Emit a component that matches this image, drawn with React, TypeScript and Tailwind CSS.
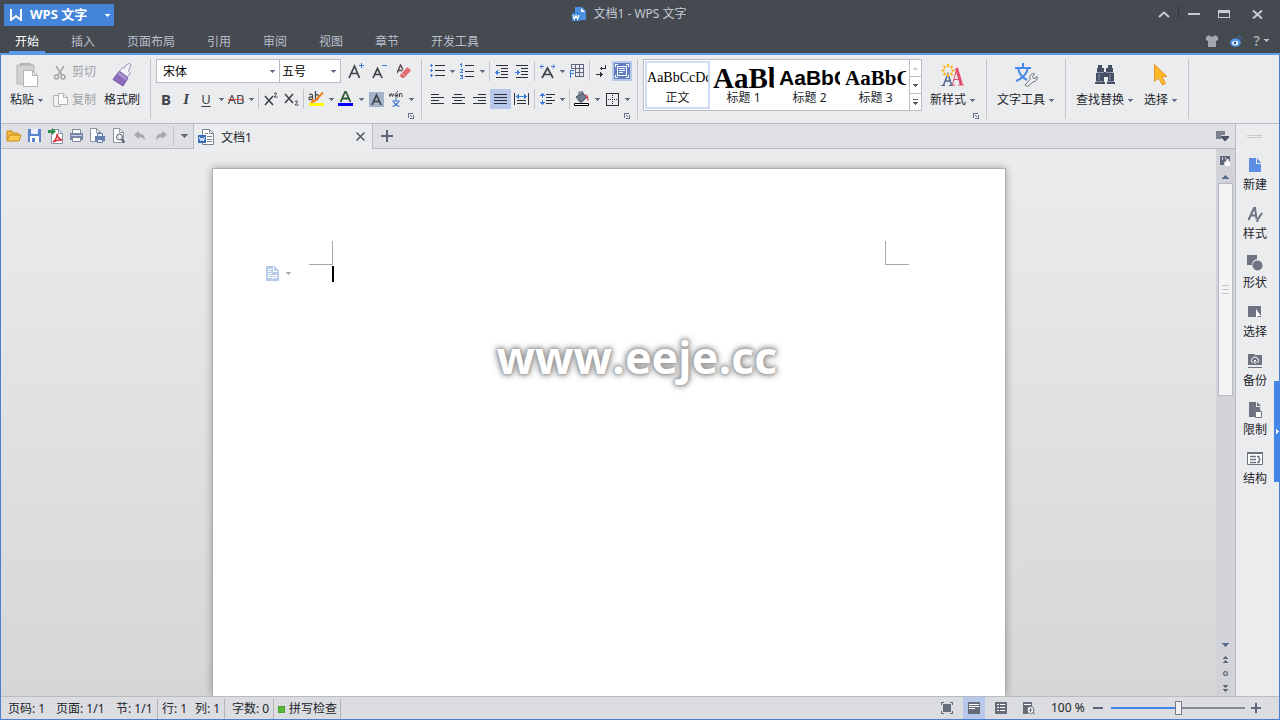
import React, { useState } from 'react';
import { clsx } from 'clsx';

type IconProps = { w?: number; h?: number; crisp?: boolean; children: React.ReactNode };

const Icon = ({ w = 16, h = 16, crisp, children }: IconProps) => (
  <svg
    width={w}
    height={h}
    viewBox={`0 0 ${w} ${h}`}
    fill="none"
    shapeRendering={crisp ? 'crispEdges' : 'auto'}
    className="shrink-0"
    aria-hidden="true"
  >
    {children}
  </svg>
);

const Caret = ({ color = '#68718c' }: { color?: string }) => (
  <Icon w={5} h={3} crisp>
    <path d="M0 0h5v1H0zM1 1h3v1H1zM2 2h1v1H2z" fill={color} />
  </Icon>
);

const ToolButton = ({ label, wide, active, children }: { label: string; wide?: boolean; active?: boolean; children: React.ReactNode }) => (
  <button
    type="button"
    aria-label={label}
    className={clsx(
      'flex h-5 shrink-0 items-center justify-center',
      wide ? 'w-[21px]' : 'w-5',
      active ? 'bg-[#b7c8ea]' : 'hover:bg-[#d5def0]'
    )}
  >
    {children}
  </button>
);

const DropButton = ({ label }: { label: string }) => (
  <button type="button" aria-label={label} className="flex h-5 w-2.5 shrink-0 items-center justify-center hover:bg-[#d5def0]">
    <Caret />
  </button>
);

const Sep = () => <span className="mx-0.5 h-5 w-px shrink-0 bg-[#c3c5cb]" />;

const GroupLine = () => <span className="mt-1 h-[60px] w-px shrink-0 bg-[#c3c5cb]" />;

const Launcher = ({ label }: { label: string }) => (
  <button type="button" aria-label={label} className="flex h-2 w-2.5 items-center justify-center">
    <Icon w={6} h={6} crisp>
      <path d="M0 0h5v1H1v4H0zM5 2h1v4H2V5h3zM3 3h1v1H3zM2 2h1v1H2z" fill="#68718c" />
    </Icon>
  </button>
);

const Lines = ({ rows }: { rows: number[][] }) => (
  <>
    {rows.map(([x, y, w]) => (
      <rect key={`${x}-${y}`} x={x} y={y} width={w} height={1} fill="#2c2f36" />
    ))}
  </>
);

const menus = ['开始', '插入', '页面布局', '引用', '审阅', '视图', '章节', '开发工具'];

const WriterDocIcon = () => (
  <Icon w={14} h={14}>
    <path d="M3 0h7l4 4v9H3z" fill="#4a8fe0" />
    <path d="M9 1l4 4H9z" fill="#fff" />
    <path d="M0 6h8v8H0z" fill="#3f86da" />
    <path d="M1 8l1.300 4L4 8.500 5.600 12 7 8" stroke="#fff" strokeWidth="1.300" />
  </Icon>
);

const TitleBar = () => (
  <header className="bg-[#454950] text-[#c5cad8]">
    <div className="flex h-7 items-start">
      <div className="flex flex-1 pl-1 pt-1">
        <button type="button" className="flex h-[22px] w-[110px] items-center bg-[#4485d9] pl-1.5 text-[13px] font-bold text-white">
          <Icon w={12} h={12}>
            <path d="M1 0v11l5-4 5 4V0" stroke="#fff" strokeWidth="2" />
          </Icon>
          <span className="ml-2 flex-1 whitespace-nowrap text-left">WPS 文字</span>
          <span className="mr-1"><Caret color="#fff" /></span>
        </button>
      </div>
      <div className="mr-3.5 flex h-7 items-center gap-[7px]">
        <WriterDocIcon />
        <h1 className="whitespace-nowrap text-xs">文档1 - WPS 文字</h1>
      </div>
      <div className="flex h-7 flex-1 items-center justify-end pr-[11px]">
        <button type="button" aria-label="折叠功能区" className="flex w-5 justify-center">
          <Icon w={12} h={7}><path d="M1 6l5-4.500L11 6" stroke="#c5cad8" strokeWidth="2" /></Icon>
        </button>
        <span className="mb-1 ml-1 h-3 w-px bg-[#2f3238]" />
        <button type="button" aria-label="最小化" className="flex w-[29px] justify-center">
          <Icon w={12} h={2} crisp><path d="M0 0h12v2H0z" fill="#c5cad8" /></Icon>
        </button>
        <button type="button" aria-label="还原" className="flex w-[31px] justify-center">
          <Icon w={12} h={8} crisp><path d="M0 0h12v8H0zM1 3v4h10V3z" fill="#c5cad8" fillRule="evenodd" /></Icon>
        </button>
        <button type="button" aria-label="关闭" className="ml-1.5 flex w-6 justify-center">
          <Icon w={11} h={9}><path d="M1 .5l9 8M10 .5l-9 8" stroke="#c5cad8" strokeWidth="2" /></Icon>
        </button>
      </div>
    </div>
    <div className="flex h-[25px] items-stretch justify-between">
      <nav className="flex gap-8 pl-[15px]">
        {menus.map((name, i) => (
          <a
            key={name}
            href="#"
            className={clsx('relative whitespace-nowrap text-xs leading-[27px]', i === 0 ? 'text-white' : 'text-[#b9bfcc]')}
          >
            {name}
            {i === 0 && <span className="absolute -inset-x-1.5 bottom-0 h-0.5 bg-[#5a9ae8]" />}
          </a>
        ))}
      </nav>
      <div className="flex items-center gap-3 pr-[11px]">
        <button type="button" aria-label="皮肤">
          <Icon w={12} h={12}><path d="M0 2l3-2 1.500 1.500h3L9 0l3 2v3l-2 1v6H2V6L0 5z" fill="#a3a8b0" /></Icon>
        </button>
        <button type="button" aria-label="微博">
          <Icon w={12} h={12}>
            <ellipse cx="5.500" cy="7.500" rx="5.300" ry="4.300" fill="#4d93e6" />
            <ellipse cx="5.200" cy="8" rx="3" ry="2.300" fill="#fff" />
            <circle cx="5" cy="8" r="1.400" fill="#2a5da8" />
            <path d="M8 1q3 0 3 3" stroke="#38639c" strokeWidth="1.500" />
          </Icon>
        </button>
        <button type="button" aria-label="帮助" className="flex items-center gap-1 text-sm font-semibold leading-none text-[#a3a8b0]">
          ?<Caret color="#b9bfcc" />
        </button>
      </div>
    </div>
    <div className="h-0.5 bg-[#5a9ae8]" />
  </header>
);

const BigButton = ({ label, drop, children }: { label: string; drop?: boolean; children: React.ReactNode }) => (
  <button type="button" className="flex shrink-0 flex-col items-center hover:bg-[#dfe6f3]">
    <span className="flex h-7 items-center">{children}</span>
    <span className="mt-px flex h-5 items-center gap-1 whitespace-nowrap text-xs">
      {label}
      {drop && <Caret />}
    </span>
  </button>
);

const ClipboardGroup = () => (
  <div className="flex shrink-0 items-start pl-[9px] pr-2.5 pt-1.5">
    <BigButton label="粘贴" drop>
      <Icon w={22} h={24}>
        <path d="M1 2h17v19H1z" fill="#d3d3d3" stroke="#b3b3b3" />
        <path d="M5 3V1h9v2" stroke="#b3b3b3" strokeWidth="2" />
        <path d="M7.500 7.500h9l5 5v11h-14z" fill="#fff" stroke="#b5b5b5" />
        <path d="M16.500 7.500v5h5z" fill="#e4e4e4" stroke="#b5b5b5" />
      </Icon>
    </BigButton>
    <div className="ml-2.5 mt-px flex flex-col gap-2 text-xs text-[#a0a1a5]">
      <button type="button" disabled className="flex h-5 items-center gap-1.5 whitespace-nowrap">
        <Icon w={13} h={15}>
          <path d="M3 1l6 9M11 1L5 10" stroke="#a6a6a6" strokeWidth="1.500" />
          <circle cx="3.500" cy="12" r="2" stroke="#a6a6a6" strokeWidth="1.500" />
          <circle cx="10" cy="12" r="2" stroke="#a6a6a6" strokeWidth="1.500" />
        </Icon>
        剪切
      </button>
      <button type="button" disabled className="flex h-5 items-center gap-1 whitespace-nowrap">
        <Icon w={15} h={15}>
          <path d="M.5 2.500h7v11h-7z" fill="#f2f2f2" stroke="#b3b3b3" />
          <path d="M5.500.5h5l4 4v7h-9z" fill="#fafafa" stroke="#b3b3b3" />
          <path d="M10.500.5v4h4" stroke="#b3b3b3" />
        </Icon>
        复制
      </button>
    </div>
    <div className="ml-2">
      <BigButton label="格式刷">
        <Icon w={22} h={24}>
          <path d="M15 2l3-1.500 2 1-2.500 6.500 2 2-3 4-8-6 3-3.500 2 .5z" fill="#f4f2f8" stroke="#9d93b4" />
          <path d="M8 8.500L17 15l-5 8-10-6.500z" fill="#8b6cb8" stroke="#74559f" />
          <path d="M8 9l8.500 6-1.500 2-8.500-6z" fill="#b196d6" />
        </Icon>
      </BigButton>
    </div>
  </div>
);

const ComboBox = ({ label, options, className }: { label: string; options: string[]; className: string }) => (
  <span className={clsx('relative flex h-6 items-center border border-[#babdc5] bg-white', className)}>
    <select aria-label={label} className="h-full w-full appearance-none bg-transparent pt-px text-xs text-black outline-none">
      {options.map((o) => <option key={o}>{o}</option>)}
    </select>
    <span className="pointer-events-none absolute right-1"><Caret /></span>
  </span>
);

const FontGroup = () => (
  <div className="shrink-0 pl-[5px] pr-[5px] pt-1">
    <div className="flex items-center">
      <ComboBox label="字体" options={['宋体', '黑体', '楷体']} className="w-[124px] pl-1.5" />
      <ComboBox label="字号" options={['五号', '四号', '小四']} className="-ml-px w-[62px] pl-0.5" />
      <span className="w-[3px]" />
      <button type="button" aria-label="增大字号" className="flex h-5 w-6 items-center justify-center">
        <Icon w={16} h={16}>
          <path d="M1 15L6.500 3l5 12M3 10.500h7" stroke="#3f4248" strokeWidth="1.700" />
          <path d="M13.500 0v5M11 2.500h5" stroke="#3d7be0" />
        </Icon>
      </button>
      <button type="button" aria-label="减小字号" className="flex h-5 w-6 items-center justify-center">
        <Icon w={16} h={16}>
          <path d="M1 15L5.500 5.500l4.500 9.500M3 11.500h5.500" stroke="#3f4248" strokeWidth="1.700" />
          <path d="M10 2.500h5" stroke="#3d7be0" />
        </Icon>
      </button>
      <button type="button" aria-label="清除格式" className="flex h-5 w-6 items-center justify-center">
        <Icon w={14} h={15}>
          <path d="M0 9L3.500 1 6 5.500M1.500 6.500h4" stroke="#5a4a50" strokeWidth="1.500" />
          <path d="M3 11l7.500-8L14 6.500 7 14H5l-2-2z" fill="#e06c70" />
          <path d="M5 9l3.500 3.500" stroke="#f3b3b5" />
        </Icon>
      </button>
    </div>
    <div className="mt-1.5 flex items-center text-[#3f4248]">
      <ToolButton label="加粗"><span className="font-['Noto_Sans'] text-[15px] font-bold leading-none">B</span></ToolButton>
      <ToolButton label="倾斜"><span className="font-['Liberation_Serif'] text-[15px] font-bold italic leading-none">I</span></ToolButton>
      <ToolButton label="下划线"><span className="text-[13px] leading-none underline underline-offset-2">U</span></ToolButton>
      <DropButton label="下划线样式" />
      <ToolButton label="删除线">
        <span className="relative text-[13px] leading-none">
          AB
          <span className="absolute inset-x-0 top-1/2 h-px bg-[#e04848]" />
        </span>
      </ToolButton>
      <DropButton label="删除线样式" />
      <Sep />
      <ToolButton label="上标">
        <Icon w={15} h={14}>
          <path d="M1 4l8 9M9 4l-8 9" stroke="#3f4248" strokeWidth="1.600" />
          <path d="M10 1.500q2.500-1.500 2.500.5L10 5h3.500" stroke="#3f4248" />
        </Icon>
      </ToolButton>
      <ToolButton label="下标">
        <Icon w={15} h={14}>
          <path d="M1 2l8 9M9 2l-8 9" stroke="#3f4248" strokeWidth="1.600" />
          <path d="M11 9.500q2.500-1.500 2.500.5L11 13h3.500" stroke="#3f4248" />
        </Icon>
      </ToolButton>
      <Sep />
      <ToolButton label="突出显示">
        <Icon w={16} h={16}>
          <path d="M1 3.500q3.500-1 3.500 1V9M4.500 6q-3.500-.5-3.500 1.500T4.500 8M7.500 0v9M7.500 4q3-1.500 3 2T7.500 8.500" stroke="#3f4248" strokeWidth="1.200" />
          <path d="M15 1.500L7 10l-3 1 1-3" stroke="#f08018" strokeWidth="2" />
          <path d="M1 12h15v3H1z" fill="#ff0" />
        </Icon>
      </ToolButton>
      <DropButton label="突出显示颜色" />
      <ToolButton label="字体颜色">
        <Icon w={16} h={16}>
          <path d="M2.500 11L7.500 0l5 11M4.500 7.500h6" stroke="#2f5a34" strokeWidth="1.800" />
          <path d="M0 12h15v3H0z" fill="#00f" />
        </Icon>
      </ToolButton>
      <DropButton label="选择字体颜色" />
      <ToolButton label="字符底纹">
        <Icon w={15} h={15}>
          <path d="M0 0h15v15H0z" fill="#a3b1c9" />
          <path d="M3 13L7.500 3 12 13M4.500 9.500h6" stroke="#3f4248" strokeWidth="1.700" />
        </Icon>
      </ToolButton>
      <ToolButton label="拼音指南">
        <Icon w={14} h={16}>
          <path d="M0 2.500l1 3 1.300-3 1.300 3 1-3M6 4.500h3Q9 2.500 7.500 2.500T6 4.500 9 6M7.500 1.500L9 0M10.500 6V2.500q2.500-.5 2.500 1V6" stroke="#3f4248" />
          <path d="M7 7v3M3 10h8M4.500 10.500q1 3 6 5M9.500 10.500q-1 3-6 5" stroke="#4a7fd0" strokeWidth="1.200" />
        </Icon>
      </ToolButton>
      <DropButton label="拼音选项" />
    </div>
    <div className="mt-[3px] flex justify-end"><Launcher label="字体设置" /></div>
  </div>
);

const ParagraphGroup = () => (
  <div className="shrink-0 px-[5px] pt-1.5">
    <div className="flex items-center">
      <ToolButton label="项目符号">
        <Icon w={15} h={14} crisp>
          {[0, 5, 10].map((y) => <path key={y} d={`M1 ${y}h1v3h-1zM0 ${y + 1}h3v1h-3z`} fill="#3d7be0" />)}
          <Lines rows={[[5, 1, 10], [5, 6, 10], [5, 11, 10]]} />
        </Icon>
      </ToolButton>
      <DropButton label="项目符号样式" />
      <ToolButton label="编号">
        <Icon w={14} h={16} crisp>
          <path d="M1 0h1v4H1zM0 1h1v1H0zM0 6h3v1H0zM2 7h1v1H2zM1 8h1v1H1zM0 9h3v1H0zM0 12h3v1H0zM2 13h1v2H2zM1 13h1v1H1zM0 15h3v1H0z" fill="#3d7be0" />
          <Lines rows={[[5, 2, 9], [5, 8, 9], [5, 13, 9]]} />
        </Icon>
      </ToolButton>
      <DropButton label="编号样式" />
      <Sep />
      <ToolButton label="减少缩进">
        <Icon w={14} h={13} crisp>
          <Lines rows={[[1, 0, 12], [6, 3, 7], [6, 6, 7], [6, 9, 7], [1, 12, 12]]} />
          <path d="M0 7h5v1H0zM1 6h1v3H1zM2 5h1v5H2z" fill="#3d7be0" />
        </Icon>
      </ToolButton>
      <ToolButton label="增加缩进">
        <Icon w={14} h={13} crisp>
          <Lines rows={[[1, 0, 12], [6, 3, 7], [6, 6, 7], [6, 9, 7], [1, 12, 12]]} />
          <path d="M0 7h5v1H0zM3 6h1v3H3zM2 5h1v5H2z" fill="#3d7be0" />
        </Icon>
      </ToolButton>
      <Sep />
      <ToolButton label="中文版式">
        <Icon w={15} h={15}>
          <path d="M2 14L7.500 4 13 14M4 10.500h7" stroke="#3f4248" strokeWidth="1.700" />
          <path d="M0 2.500h4M11 2.500h4M2 .5l-2 2 2 2M13 .5l2 2-2 2" stroke="#3d7be0" />
        </Icon>
      </ToolButton>
      <DropButton label="中文版式选项" />
      <ToolButton label="绘制表格">
        <Icon w={15} h={14} crisp>
          <path d="M1 0h13v1H1zM1 4h13v1H1zM5 8h9v1H5zM5 12h9v1H5zM1 0h1v5H1zM5 0h1v13H5zM9 0h1v13H9zM13 0h1v13h-1z" fill="#5d6880" />
          <path d="M0 6h4v1H1v2h3v1H1v4H0z" fill="#3d7be0" />
        </Icon>
      </ToolButton>
      <Sep />
      <ToolButton label="显示段落标记">
        <Icon w={12} h={13} crisp>
          <path d="M9 0h1v4H6v1H5V4H4V3h1V2h1v1h3zM0 9h4V7h1v1h1v1h1v1H6v1H5v1H4v-2H0z" fill="#2c2f36" />
        </Icon>
      </ToolButton>
      <ToolButton label="段落布局" active>
        <Icon w={16} h={16} crisp>
          <path d="M0 0h16v16H0z" fill="#5f7fc0" />
          <path d="M1 1h3v1H2v2H1zM12 1h3v3h-1V2h-2zM1 12h1v2h2v1H1zM14 12h1v3h-3v-1h2z" fill="#fff" />
          <path d="M3 3h10v10H3zM4 4v8h8V4z" fill="#fff" fillRule="evenodd" />
          <path d="M5 5h6v1H5zM5 7h6v1H5zM5 9h4v1H5z" fill="#fff" />
        </Icon>
      </ToolButton>
    </div>
    <div className="mt-2 flex items-center">
      <ToolButton label="左对齐" wide>
        <Icon w={13} h={10} crisp><Lines rows={[[0, 0, 8], [0, 3, 13], [0, 6, 8], [0, 9, 13]]} /></Icon>
      </ToolButton>
      <ToolButton label="居中" wide>
        <Icon w={13} h={10} crisp><Lines rows={[[2, 0, 8], [0, 3, 13], [2, 6, 8], [0, 9, 13]]} /></Icon>
      </ToolButton>
      <ToolButton label="右对齐" wide>
        <Icon w={13} h={10} crisp><Lines rows={[[5, 0, 8], [0, 3, 13], [5, 6, 8], [0, 9, 13]]} /></Icon>
      </ToolButton>
      <ToolButton label="两端对齐" wide active>
        <Icon w={13} h={10} crisp><Lines rows={[[0, 0, 13], [0, 3, 13], [0, 6, 13], [0, 9, 13]]} /></Icon>
      </ToolButton>
      <ToolButton label="分散对齐" wide>
        <Icon w={15} h={12} crisp>
          <path d="M0 0h1v12H0zM14 0h1v12h-1z" fill="#2c2f36" />
          <Lines rows={[[3, 7, 9], [3, 10, 9]]} />
          <path d="M2 3h11v1H2zM4 1h1v5H4zM3 2h1v3H3zM10 1h1v5h-1zM11 2h1v3h-1z" fill="#3d7be0" />
        </Icon>
      </ToolButton>
      <Sep />
      <ToolButton label="行距">
        <Icon w={15} h={12} crisp>
          <path d="M2 0h1v5H2zM1 1h3v1H1zM0 2h5v1H0zM2 7h1v5H2zM0 9h5v1H0zM1 10h3v1H1z" fill="#3d7be0" />
          <Lines rows={[[6, 1, 9], [6, 4, 6], [6, 7, 9], [6, 10, 6]]} />
        </Icon>
      </ToolButton>
      <DropButton label="行距选项" />
      <Sep />
      <ToolButton label="底纹颜色">
        <Icon w={16} h={16}>
          <path d="M2 6l6-4 5 4-5 5H6z" fill="#707a8c" stroke="#4c5566" />
          <path d="M5 5V1h4v3" stroke="#4c5566" />
          <path d="M11 3q4 1 3.500 7-2-1-2-4z" fill="#e04848" />
          <path d="M.5 12.500h14v2h-14z" fill="#fff" stroke="#000" />
        </Icon>
      </ToolButton>
      <DropButton label="选择底纹颜色" />
      <ToolButton label="边框">
        <Icon w={13} h={13} crisp>
          <path d="M0 0h13v13H0zM1 1v11h11V1z" fill="#2c2f36" fillRule="evenodd" />
          <path d="M6.500 2v9M2 6.500h9" stroke="#2c2f36" strokeDasharray="1 1" />
        </Icon>
      </ToolButton>
      <DropButton label="边框样式" />
    </div>
    <div className="mt-[3px] flex justify-end"><Launcher label="段落设置" /></div>
  </div>
);

const styles = [
  { name: '正文', sample: 'AaBbCcDd', preview: "font-['Liberation_Serif'] text-sm" },
  { name: '标题 1', sample: 'AaBb', preview: "font-['Liberation_Serif'] text-[29px] font-bold" },
  { name: '标题 2', sample: 'AaBbC', preview: "font-['Liberation_Sans'] text-[21px] font-bold" },
  { name: '标题 3', sample: 'AaBbC', preview: "font-['Liberation_Serif'] text-[21px] font-bold" },
];

const StyleGallery = () => {
  const [current, setCurrent] = useState('正文');

  return (
    <div className="mt-1 flex h-[52px] shrink-0 border border-[#babdc5] bg-white">
      <div className="flex gap-px p-px">
        {styles.map((s) => (
          <button
            key={s.name}
            type="button"
            onClick={() => setCurrent(s.name)}
            className={clsx(
              'flex w-[65px] flex-col border-2',
              current === s.name ? 'border-[#cddbf5]' : 'border-transparent'
            )}
          >
            <span className={clsx('h-[30px] w-full overflow-hidden whitespace-nowrap text-left leading-[30px] text-black', s.preview)}>
              {s.sample}
            </span>
            <span className="w-full text-center text-xs leading-[18px]">{s.name}</span>
          </button>
        ))}
      </div>
      <div className="flex w-3 flex-col divide-y divide-[#babdc5] border-l border-[#babdc5]">
        <button type="button" aria-label="上一行" className="flex flex-1 items-center justify-center">
          <Icon w={5} h={3} crisp><path d="M2 0h1v1H2zM1 1h3v1H1zM0 2h5v1H0z" fill="#cfd0d4" /></Icon>
        </button>
        <button type="button" aria-label="下一行" className="flex flex-1 items-center justify-center">
          <Caret color="#555a63" />
        </button>
        <button type="button" aria-label="更多样式" className="flex flex-1 items-center justify-center">
          <Icon w={5} h={6} crisp><path d="M0 0h5v1H0zM0 3h5v1H0zM1 4h3v1H1zM2 5h1v1H2z" fill="#555a63" /></Icon>
        </button>
      </div>
    </div>
  );
};

const rays = [0, 45, 90, 135, 180, 225, 270, 315];

const Ribbon = () => (
  <div className="flex h-[69px] shrink-0 overflow-hidden border-b border-[#b9bbc3] bg-[#ebecee]">
    <ClipboardGroup />
    <GroupLine />
    <FontGroup />
    <GroupLine />
    <ParagraphGroup />
    <GroupLine />
    <div className="flex shrink-0 pl-[5px] pr-[5px]">
      <StyleGallery />
      <div className="flex flex-col items-end pl-2 pt-1.5">
        <div className="pr-1.5">
          <BigButton label="新样式" drop>
            <Icon w={24} h={23}>
              <path d="M2.500 21L7 10l3.500 11M4 17h5" stroke="#4f6690" strokeWidth="1.500" />
              <path d="M0 21.500h4M8 21.500h4" stroke="#4f6690" />
              <path d="M11.500 20.500L16 4" stroke="#e0506c" />
              <path d="M15.500 4l5 17" stroke="#e0506c" strokeWidth="3" />
              <path d="M13 15.500h6M10 21h4M17 21h6" stroke="#e0506c" />
              {rays.map((a) => (
                <path key={a} d="M7 0v3" stroke="#fbb416" strokeWidth="2" transform={`rotate(${a} 7 6.500)`} />
              ))}
            </Icon>
          </BigButton>
        </div>
        <div className="mt-0.5"><Launcher label="样式设置" /></div>
      </div>
    </div>
    <GroupLine />
    <div className="flex shrink-0 items-start pl-2.5 pr-[11px] pt-1.5">
      <BigButton label="文字工具" drop>
        <Icon w={24} h={24}>
          <path d="M9 0v4M1 5h16M4 5q2 9 9 12M14 5Q12 14 2 18" stroke="#4688e8" strokeWidth="2" />
          <path d="M11 22l5-5.500q-1-4.500 2.500-6l2 .5-2 2.500 1 2 2.500-.5 1-1.500q1 4.500-4 5.500l-5 4q-2 1-3-1z" fill="#f0f0f2" stroke="#6c7280" />
        </Icon>
      </BigButton>
    </div>
    <GroupLine />
    <div className="flex shrink-0 items-start gap-[11px] pl-2.5 pr-[11px] pt-1.5">
      <BigButton label="查找替换" drop>
        <Icon w={22} h={22} crisp>
          <path d="M4 1h4v3h2v4h2V4h2V1h4v3h1v5h1v9h1v2h-8v-2h1v-5h-4v5h1v2H1v-2h1V9h1V4h1z" fill="#475063" />
          <path d="M3 8h7v1H3zM12 8h7v1h-7zM2 17h7v1H2zM13 17h7v1h-7z" fill="#8d99ad" />
          <path d="M4 10h2v6H4zM15 10h2v6h-2z" fill="#66738a" />
        </Icon>
      </BigButton>
      <BigButton label="选择" drop>
        <Icon w={15} h={24}>
          <path d="M1.500 1.500v17l4-3.500 4 7 3-1.500-3.500-7h5z" fill="#fcb827" stroke="#e59430" />
        </Icon>
      </BigButton>
    </div>
    <GroupLine />
  </div>
);

const quickTools = [
  { name: '打开', art: <><path d="M1 12V3h5l1 2h5v3H5z" fill="#f6b93b" stroke="#c98a17" /><path d="M1 13l3-6h11l-2 6z" fill="#fcc94b" stroke="#c98a17" /></> },
  { name: '保存', art: <><path d="M1 1h13v13H1z" fill="#5b82cf" /><path d="M4 1h7v5H4z" fill="#e9effb" /><path d="M3 8h9v6H3z" fill="#fff" /><path d="M5 10h3v4H5z" fill="#5b82cf" /></> },
  { name: '输出为PDF', art: <><path d="M3.500 1.500h7l4 4v10h-11z" fill="#fff" stroke="#8b93a3" /><path d="M10.500 1.500v4h4" stroke="#8b93a3" /><path d="M5 14q4-3 4-8 1 5 5 6-5-.5-9 2z" stroke="#d8343a" strokeWidth="1.500" /><path d="M0 2h4V0l4 3.500L4 7V5H0z" fill="#2f8f4e" /></> },
  { name: '打印', art: <><path d="M3.500 1.500h8v4h-8z" fill="#fff" stroke="#7c879b" /><path d="M1 5h13v7H1z" fill="#7788a6" /><path d="M2 7h11v1H2z" fill="#c3cde0" /><path d="M3.500 9.500h8v4h-8z" fill="#fff" stroke="#7c879b" /></> },
  { name: '高级打印', art: <><path d="M.5.500h6l4 4v9H.5z" fill="#fff" stroke="#8b93a3" /><path d="M6.500.5v4h4" stroke="#8b93a3" /><path d="M5 8h10v5H5z" fill="#6480ad" /><path d="M7.500 5.500h5v3h-5zM7.500 11.500h5v3h-5z" fill="#e3ebf8" stroke="#6480ad" /></> },
  { name: '打印预览', art: <><path d="M2.500.5h6l4 4v10h-10z" fill="#fff" stroke="#8b93a3" /><path d="M8.500.5v4h4" stroke="#8b93a3" /><circle cx="8.500" cy="9" r="3" fill="#e8eaef" stroke="#555b68" /><path d="M10.500 11.500l3 3" stroke="#555b68" strokeWidth="2" /></> },
  { name: '撤销', art: <path d="M2 6.500L7 3v2.500q6 0 6 7-2-3.500-6-3.500v2z" fill="#a5a7ad" /> },
  { name: '恢复', art: <path d="M14 6.500L9 3v2.500q-6 0-6 7Q5 9 9 9v2z" fill="#a5a7ad" /> },
];

const TabStrip = () => (
  <div className="flex h-[25px] bg-[#dfe0e4]">
    <div className="flex items-center border-b border-r border-[#b9bbc3] pl-0.5">
      {quickTools.map((t) => (
        <button key={t.name} type="button" aria-label={t.name} className="flex w-[21px] justify-center">
          <Icon>{t.art}</Icon>
        </button>
      ))}
      <Sep />
      <button type="button" aria-label="自定义快速访问" className="flex w-[17px] justify-center">
        <Icon w={7} h={4} crisp><path d="M0 0h7v1H0zM1 1h5v1H1zM2 2h3v1H2zM3 3h1v1H3z" fill="#686e79" /></Icon>
      </button>
    </div>
    <div className="flex w-[179px] items-center border-r border-[#b9bbc3] bg-[#ebecee] pl-1 pr-[7px]">
      <Icon>
        <path d="M4.500.5h7l4 4v11h-11z" fill="#fff" stroke="#7a8190" />
        <path d="M11.500.5v4h4M7 4.500h3M9 7.500h5M9 10.500h5M9 12.500h5" stroke="#7a8190" />
        <path d="M0 6h8v8H0z" fill="#3a6fc0" />
        <path d="M1.500 8l1.200 4L4 9l1.300 3 1.200-4" stroke="#fff" />
      </Icon>
      <span className="ml-[7px] flex-1 pt-0.5 text-left text-xs">文档1</span>
      <button type="button" aria-label="关闭文档">
        <Icon w={9} h={9}><path d="M.5.5l8 8M8.500.5l-8 8" stroke="#4e5668" strokeWidth="1.500" /></Icon>
      </button>
    </div>
    <div className="flex flex-1 items-center justify-between border-b border-[#b9bbc3] pl-2 pr-1.5">
      <button type="button" aria-label="新建文档">
        <Icon w={12} h={12} crisp><path d="M5 0h2v5h5v2H7v5H5V7H0V5h5z" fill="#5d6578" /></Icon>
      </button>
      <button type="button" aria-label="标签列表">
        <Icon w={13} h={11} crisp><path d="M0 0h9v4H5v4H0z" fill="#7b8190" /><path d="M5 5h8v2h-1v1h-1v1h-1v1H8V9H7V8H6V7H5z" fill="#4e5668" /></Icon>
      </button>
    </div>
  </div>
);

const VerticalScroll = () => (
  <div className="flex w-[19px] shrink-0 flex-col items-center bg-[#d2d3d9]">
    <button type="button" aria-label="标尺" className="mt-1 flex h-[18px] items-center">
      <Icon w={11} h={12} crisp>
        <path d="M0 0h10v9H0z" fill="#5d6578" />
        <path d="M2 1h1v3H2zM5 1h1v2H5z" fill="#d2d3d9" />
        <path d="M4 6h1V5h1V3h3v2h2v6H5V9H4z" fill="#d2d3d9" />
        <path d="M5 7h1V6h1V4h1v2h2v4H6V9H5z" fill="#fff" />
      </Icon>
    </button>
    <button type="button" aria-label="向上滚动" className="flex h-3 items-center">
      <Icon w={7} h={4} crisp><path d="M3 0h1v1H3zM2 1h3v1H2zM1 2h5v1H1zM0 3h7v1H0z" fill="#5d6b8c" /></Icon>
    </button>
    <div className="flex w-full flex-1 flex-col items-start pl-0.5">
      <div className="flex h-[213px] w-[15px] flex-col items-center justify-center gap-[3px] border border-[#b7bac3] bg-[#f4f4f4]">
        <span className="h-px w-[7px] bg-[#c3c5cb]" />
        <span className="h-px w-[7px] bg-[#c3c5cb]" />
        <span className="h-px w-[7px] bg-[#c3c5cb]" />
      </div>
    </div>
    <div className="flex flex-col items-center">
      <button type="button" aria-label="向下滚动" className="flex h-3.5 items-center">
        <Icon w={7} h={4} crisp><path d="M0 0h7v1H0zM1 1h5v1H1zM2 2h3v1H2zM3 3h1v1H3z" fill="#5d6b8c" /></Icon>
      </button>
      <button type="button" aria-label="上一页" className="flex h-3.5 items-center">
        <Icon w={5} h={7} crisp><path d="M2 0h1v1H2zM1 1h3v1H1zM0 2h5v1H0zM2 4h1v1H2zM1 5h3v1H1zM0 6h5v1H0z" fill="#5f6674" /></Icon>
      </button>
      <button type="button" aria-label="选择浏览对象" className="flex h-[15px] items-center">
        <Icon w={5} h={5}><circle cx="2.500" cy="2.500" r="1.900" stroke="#5f6674" strokeWidth="1.200" /></Icon>
      </button>
      <button type="button" aria-label="下一页" className="flex h-[15px] items-center">
        <Icon w={5} h={7} crisp><path d="M0 0h5v1H0zM1 1h3v1H1zM2 2h1v1H2zM0 4h5v1H0zM1 5h3v1H1zM2 6h1v1H2z" fill="#5f6674" /></Icon>
      </button>
    </div>
  </div>
);

const Workspace = () => (
  <div className="flex min-h-0 flex-1">
    <div className="flex min-w-0 flex-1 justify-center overflow-hidden bg-linear-to-b from-[#ebecee] to-[#d6d6d8] pt-[19px]">
      <article className="relative w-[794px] shrink-0 border border-b-0 border-[#adafb5] bg-white pt-[72px] shadow-[0_0_8px_rgba(0,0,0,0.3)]">
        <div className="flex justify-between px-24">
          <span className="size-6 border-b border-r border-[#a8a8a8]" />
          <span className="size-6 border-b border-l border-[#a8a8a8]" />
        </div>
        <div className="mt-px flex items-start pl-[53px]">
          <button type="button" aria-label="段落选项" className="flex items-center gap-[7px]">
            <Icon w={13} h={15} crisp>
              <path d="M0 0h8l5 5v10H0z" fill="#b9cceb" />
              <path d="M7 1h1v4h4v1H7zM2 3h4v1H2zM2 5h3v1H2zM2 7h4v1H2zM2 9h9v3H7v1H6v-1H2zM3 10v1h7v-1z" fill="#fff" fillRule="evenodd" />
            </Icon>
            <Caret color="#a9adbb" />
          </button>
          <span className="ml-[41px] h-4 w-0.5 bg-black" />
        </div>
        <p className="absolute left-[284px] top-[156px] whitespace-nowrap font-['Open_Sans'] text-[45px] font-bold leading-[64px] text-white [text-shadow:0_0_2px_#999,0_0_4px_#999,0_0_6px_#999,0_0_8px_#aaa]">
          www.eeje.cc
        </p>
      </article>
    </div>
    <VerticalScroll />
  </div>
);

const sideItems = [
  { name: '新建', art: <><path d="M2 1h7v6h5v8H2z" fill="#5c8ee6" /><path d="M10 1l4 5h-4z" fill="#5c8ee6" /></> },
  { name: '样式', art: <><path d="M1.500 14L7 2h1l1.500 11M4 9.500h5" stroke="#6d7380" strokeWidth="2" /><path d="M15 7l-4 6-1 3" stroke="#6d7380" strokeWidth="2" /></> },
  { name: '形状', art: <><path d="M0 0h10v4q-5 1-5 6H0z" fill="#6d7380" /><circle cx="10.500" cy="10.500" r="5" fill="#6d7380" /></> },
  { name: '选择', art: <><path d="M1 2h13v11H1z" fill="#6d7380" /><path d="M9 5v9l2-2h3z" fill="#fff" /></> },
  { name: '备份', art: <><path d="M1 1h6l1 1h7v10H1zM1 14h14v1H1z" fill="#6d7380" /><path d="M5.500 10a3.500 3.500 0 1 1 5 0M8 11V7M6.500 8.500L8 7l1.500 1.500" stroke="#fff" /></> },
  { name: '限制', art: <><path d="M2 0h7v5h4v4H8v6H2z" fill="#6d7380" /><path d="M10 0l4 4h-4z" fill="#6d7380" /><path d="M8.500 9.500h6v6h-6z" fill="#fff" stroke="#6d7380" /><path d="M10 10V7.500h3V10" stroke="#6d7380" /></> },
  { name: '结构', art: <><path d="M.5 1.500h15v12H.5z" fill="#fff" stroke="#6d7380" /><path d="M0 1h16v2H0z" fill="#6d7380" /><path d="M3 5.500h6M3 8.500h6M3 11.500h6M10 5.500h2v2l1 1-1 1v2h-2" stroke="#6d7380" strokeWidth="1.300" /></> },
];

const SidePanel = () => (
  <aside className="relative flex w-11 shrink-0 flex-col border-l border-[#b9bbc3] bg-[#ebecee]">
    <div className="ml-[11px] mt-[11px] h-[3px] w-[15px] border-y border-[#c9cace]" />
    <div className="mt-[19px] flex flex-col pr-[5px]">
      {sideItems.map((item) => (
        <button key={item.name} type="button" className="flex h-[49px] flex-col items-center gap-1 text-xs leading-4">
          <Icon>{item.art}</Icon>
          {item.name}
        </button>
      ))}
    </div>
    <button type="button" aria-label="展开任务窗格" className="absolute -right-px top-[257px] flex h-[101px] w-1.5 items-center justify-center bg-[#4485e8]">
      <Icon w={3} h={5} crisp><path d="M0 0h1v5H0zM1 1h1v3H1zM2 2h1v1H2z" fill="#fff" /></Icon>
    </button>
  </aside>
);

const viewModes = [
  { name: '全屏显示', art: <><path d="M3 3h8v8H3z" fill="#666d7a" /><path d="M1 1h3v1H2v2H1zM10 1h3v3h-1V2h-2zM1 10h1v2h2v1H1zM12 10h1v3h-3v-1h2z" fill="#666d7a" /></> },
  { name: '页面视图', art: <><path d="M1 1h12v12H1z" fill="#666d7a" /><path d="M2 3h10v1H2zM2 5h10v1H2zM2 7h6v1H2z" fill="#fff" /></> },
  { name: '大纲视图', art: <><path d="M1 1h12v12H1z" fill="#666d7a" /><path d="M3 3h2v1H3zM6 3h5v1H6zM3 6h2v1H3zM6 6h5v1H6zM3 9h2v1H3zM6 9h5v1H6z" fill="#fff" /></> },
  { name: 'Web版式', art: <><path d="M2 1h9v5H7v7H2z" fill="#666d7a" /><path d="M3 3h7v1H3z" fill="#fff" /><circle cx="9.500" cy="9" r="3.500" fill="#fff" stroke="#666d7a" /><path d="M9.500 7v4M7.500 9h4M12 12l2 1" stroke="#666d7a" /></> },
];

const StatusSep = () => <span className="h-5 w-px bg-[#b3b5bb]" />;

const StatusBar = () => {
  const [zoom, setZoom] = useState(50);

  return (
    <footer className="flex h-6 shrink-0 items-center justify-between border-b border-t border-[#b9bbc3] border-b-[#4a80cc] bg-[#dcdde1] text-xs">
      <div className="flex items-center whitespace-nowrap pt-0.5">
        <span className="w-12 pl-[7px]">页码: 1</span>
        <span className="ml-[7px] w-[60px]">页面: 1/1</span>
        <span className="w-[41px]">节: 1/1</span>
        <StatusSep />
        <span className="ml-1 w-[33px]">行: 1</span>
        <span className="w-[29px]">列: 1</span>
        <StatusSep />
        <span className="ml-[7px] w-[41px]">字数: 0</span>
        <StatusSep />
        <span className="ml-1 size-[7px] border border-[#4aa02c] bg-[#5cb83a]" />
        <span className="ml-1 mr-[3px]">拼写检查</span>
        <StatusSep />
      </div>
      <div className="flex items-center pr-[18px]">
        {viewModes.map((m, i) => (
          <button
            key={m.name}
            type="button"
            aria-label={m.name}
            className={clsx('mr-[5px] flex h-[22px] w-[22px] items-center justify-center', i === 1 && 'bg-[#b7c8ea]')}
          >
            <Icon w={14} h={14} crisp={i < 3}>{m.art}</Icon>
          </button>
        ))}
        <span className="ml-[7px] w-[42px] whitespace-nowrap">100 %</span>
        <button type="button" aria-label="缩小">
          <Icon w={10} h={2} crisp><path d="M0 0h10v2H0z" fill="#5d6578" /></Icon>
        </button>
        <input
          type="range"
          aria-label="显示比例"
          min={0}
          max={100}
          value={zoom}
          onChange={(e) => setZoom(Number(e.target.value))}
          className="ml-2 mr-1.5 h-0.5 w-[134px] appearance-none bg-[linear-gradient(to_right,#4485e8_50%,#858c98_50%)] [&::-webkit-slider-thumb]:h-3.5 [&::-webkit-slider-thumb]:w-[7px] [&::-webkit-slider-thumb]:appearance-none [&::-webkit-slider-thumb]:border [&::-webkit-slider-thumb]:border-[#777c86] [&::-webkit-slider-thumb]:bg-[#f2f2f2]"
        />
        <button type="button" aria-label="放大">
          <Icon w={10} h={10} crisp><path d="M4 0h2v4h4v2H6v4H4V6H0V4h4z" fill="#5d6578" /></Icon>
        </button>
      </div>
    </footer>
  );
};

const App = () => (
  <div className="flex h-screen flex-col overflow-hidden bg-[#ebecee] font-['Noto_Sans','Noto_Sans_CJK_SC',sans-serif] text-[#22252b]">
    <TitleBar />
    <div className="flex min-h-0 flex-1 flex-col border-x border-[#4a80cc]">
      <Ribbon />
      <div className="flex min-h-0 flex-1">
        <main className="flex min-w-0 flex-1 flex-col">
          <TabStrip />
          <Workspace />
        </main>
        <SidePanel />
      </div>
      <StatusBar />
    </div>
  </div>
);

export default App;
